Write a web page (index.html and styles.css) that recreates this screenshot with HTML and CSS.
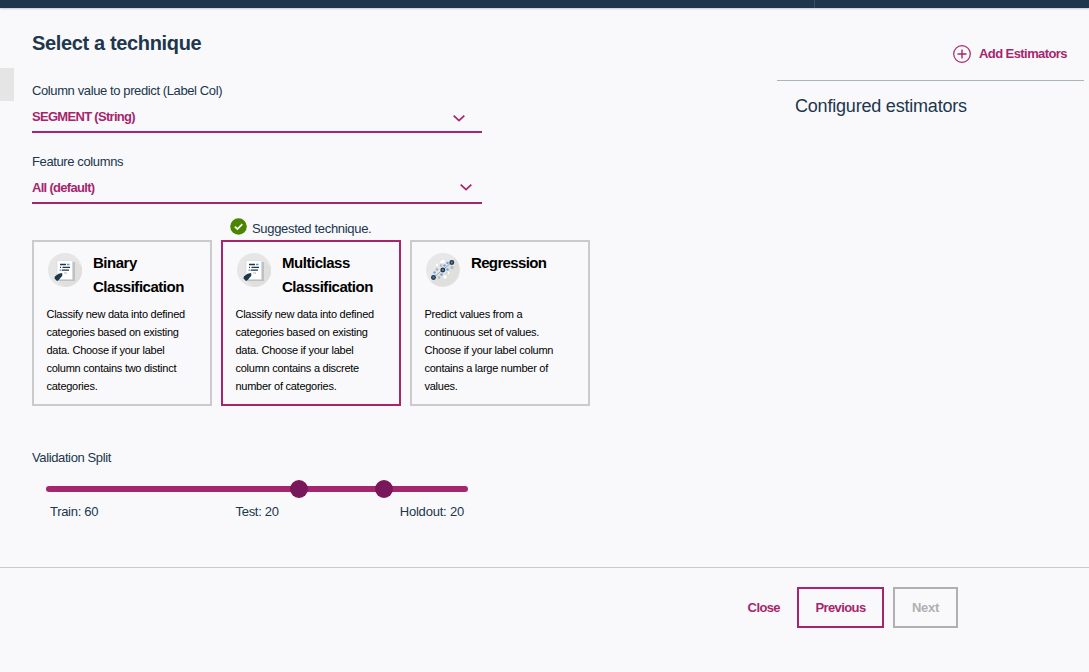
FILE: index.html
```html
<!DOCTYPE html>
<html lang="en">
<head>
<meta charset="utf-8">
<title>Select a technique</title>
<link rel="stylesheet" href="styles.css">
</head>
<body>
<svg class="defs" width="0" height="0" aria-hidden="true">
  <symbol id="doc" viewBox="0 0 34 34">
    <circle cx="17" cy="17" r="17" fill="#e6e6e6"/>
    <path d="M11 29L27 8L34 14A17 17 0 0 1 17 34Z" fill="#dfdfdd"/>
    <path d="M11 9h16v19H11z" fill="#bfc0c1"/>
    <path d="M9 7.500h15.500v19H9z" fill="#fff" stroke="#d3d5d6" stroke-width=".6"/>
    <g fill="none" stroke-width="1.300">
      <path d="M12 11.500h6M14.500 14.300h7.500M12 14.300h1M14 17.100h7" stroke="#1d3649"/>
      <path d="M19 11.500h2.500M11.500 17.100h2" stroke="#5596e6"/>
      <path d="M16 20h3" stroke="#c7c7c7"/>
    </g>
    <path d="M6.800 23.500L10.500 20.800L14.200 20L14.300 22.800L10.300 27.500L9 28L6.500 25.500Z" fill="#1d3649"/>
  </symbol>
  <symbol id="scatter" viewBox="0 0 34 34">
    <circle cx="17" cy="17" r="17" fill="#e7e7e7"/>
    <path d="M29 5A17 17 0 0 1 5 29Z" fill="#dfdfdd"/>
    <path d="M7.500 24.500L25.500 9.500" stroke="#8f979d" stroke-width=".8"/>
    <g fill="#fff"><circle cx="17" cy="8.500" r="1.700"/><circle cx="11" cy="12" r="1.300"/><circle cx="22" cy="20" r="1.400"/><circle cx="19" cy="24" r="1.700"/><circle cx="15" cy="9" r="1"/></g>
    <g fill="#b5b6b6"><circle cx="15" cy="12.500" r="1.300"/><circle cx="11" cy="16.500" r="1.400"/><circle cx="26" cy="14.500" r="1.500"/><circle cx="13" cy="24.500" r="1.200"/><circle cx="21" cy="20" r=".8"/></g>
    <g fill="#6ba3e8"><circle cx="21.500" cy="10" r="1.200"/><circle cx="18.500" cy="12.500" r="1.200"/><circle cx="8.500" cy="19.500" r="1.200"/><circle cx="15.500" cy="21.500" r="1.200"/><circle cx="21.500" cy="16.500" r="1.200"/></g>
    <g fill="#477db8" stroke="#1d3649" stroke-width="1.300"><circle cx="7.500" cy="24.500" r="1.800"/><circle cx="16.800" cy="17" r="1.800"/><circle cx="25.800" cy="9.500" r="1.800"/></g>
  </symbol>
</svg>
<div class="topbar"><span class="topbar-rule"></span></div>
<main class="workspace">
  <div class="gutter"><span class="side-tab"></span></div>
  <section class="settings">
    <h1>Select a technique</h1>
    <div class="field">
      <div class="label wide-label">Column value to predict (Label Col)</div>
      <div class="select first"><span>SEGMENT (String)</span>
        <svg width="12" height="7" viewBox="0 0 12 7"><path d="M.7.7L6 5.600L11.300.7"/></svg></div>
    </div>
    <div class="field">
      <div class="label">Feature columns</div>
      <div class="select second"><span>All (default)</span>
        <svg width="12" height="7" viewBox="0 0 12 7"><path d="M.7.7L6 5.600L11.300.7"/></svg></div>
    </div>
    <div class="suggestion">
      <svg width="17" height="17" viewBox="0 0 17 17"><circle cx="8.500" cy="8.500" r="8.300" fill="#4b8400"/><path d="M4.800 8.700L7.400 11L12.300 6.200" fill="none" stroke="#fff" stroke-width="1.700"/></svg>
      <span>Suggested technique.</span>
    </div>
    <div class="cards">
      <article class="card">
        <div class="card-head"><svg class="badge"><use href="#doc"/></svg><h2>Binary<br>Classification</h2></div>
        <p>Classify new data into defined<br>categories based on existing<br>data. Choose if your label<br>column contains two distinct<br>categories.</p>
      </article>
      <article class="card selected">
        <div class="card-head"><svg class="badge"><use href="#doc"/></svg><h2>Multiclass<br>Classification</h2></div>
        <p>Classify new data into defined<br>categories based on existing<br>data. Choose if your label<br>column contains a discrete<br>number of categories.</p>
      </article>
      <article class="card">
        <div class="card-head"><svg class="badge"><use href="#scatter"/></svg><h2 class="tight">Regression</h2></div>
        <p>Predict values from a<br>continuous set of values.<br>Choose if your label column<br>contains a large number of<br>values.</p>
      </article>
    </div>
    <div class="label split-label">Validation Split</div>
    <div class="slider"><span class="handle" style="left:60%"></span><span class="handle" style="left:80%"></span></div>
    <div class="slider-labels"><span>Train: 60</span><span>Test: 20</span><span>Holdout: 20</span></div>
  </section>
  <aside class="estimators">
    <div class="add">
      <svg width="18" height="18" viewBox="0 0 18 18"><circle cx="9" cy="9" r="8.300"/><path d="M9 4.500v9M4.500 9h9"/></svg>
      <span>Add Estimators</span>
    </div>
    <h3>Configured estimators</h3>
  </aside>
</main>
<footer>
  <span class="close">Close</span>
  <button class="previous">Previous</button>
  <button class="next" disabled>Next</button>
</footer>
</body>
</html>
```
FILE: styles.css
```css
* { box-sizing: border-box; }
body {
  margin: 0; width: 1089px; height: 672px; overflow: hidden;
  display: flex; flex-direction: column;
  background: #f9f9fb; color: #20364c;
  font: 13px/18px "Liberation Sans", Arial, sans-serif;
}
h1, h2, h3, p { margin: 0; }
.defs { position: absolute; }
.topbar { height: 8px; flex: none; background: #20364d; box-shadow: 0 1px 2px rgba(0,0,0,.2); display: flex; }
.topbar-rule { margin-left: 814px; width: 1px; background: #2f4f6b; }
.workspace { height: 559px; flex: none; display: flex; }
.gutter { width: 32px; padding-top: 60px; }
.side-tab { display: block; width: 14px; height: 33px; background: #e5e5e5; }
.settings { width: 558px; padding-top: 23px; }
h1 { font-size: 20px; line-height: 24px; letter-spacing: -.35px; white-space: nowrap; }
.field { width: 450px; }
.field .label { height: 18px; margin-top: 20px; }
h1 + .field .label { margin-top: 27px; }
.label { letter-spacing: -.38px; }
.wide-label { letter-spacing: -.39px; }
.select {
  display: flex; justify-content: space-between; height: 33px;
  padding: 8px 10px 0 0; border-bottom: 2px solid #a6266e;
  color: #a6266e; font-weight: 700; letter-spacing: -.7px;
}
.select svg { margin-top: 5px; fill: none; stroke: #a6266e; stroke-width: 1.8; }
.select.first svg { margin: 7px 7px 0 0; }
.suggestion { display: flex; height: 36px; padding: 14px 0 0 198px; gap: 5px; letter-spacing: -.32px; }
.suggestion span { padding-top: 2px; }
.cards { display: grid; grid-template-columns: repeat(3, 180px); gap: 9px; }
.card { height: 166px; border: 2px solid #cacbcd; padding: 9px 0 0 12.5px; color: #000; }
.card.selected { border-color: #a6266e; }
.card-head { display: flex; height: 54px; }
.badge { width: 34px; height: 34px; margin: 2px 11px 0 1.5px; flex: none; }
h2 { font-size: 15px; line-height: 24px; letter-spacing: -.47px; }
h2.tight { letter-spacing: -.65px; }
.card p { font-size: 11px; letter-spacing: -.26px; line-height: 18px; white-space: nowrap; }
.split-label { margin-top: 43px; }
.slider { position: relative; width: 422px; height: 6px; margin: 19px 0 0 14px; border-radius: 3px; background: #a6266e; }
.handle { position: absolute; top: -6px; width: 18px; height: 18px; margin-left: -9px; border-radius: 50%; background: #78175a; }
.slider-labels { display: grid; grid-template-columns: 185.5px 1fr auto; width: 414px; margin: 11px 0 0 18px; letter-spacing: -.3px; }
.slider-labels span:last-child { letter-spacing: -.2px; }
.estimators { width: 307px; margin-left: 187px; padding-top: 36px; }
.add {
  display: flex; justify-content: flex-end; height: 37px; gap: 8px; padding-right: 17px;
  border-bottom: 1px solid #a9b6b8; color: #a6266e; font-weight: 700; letter-spacing: -.58px;
}
.add svg { fill: none; stroke: #a6266e; stroke-width: 1.2; }
.add { padding-top: 1px; }
.add path { stroke-width: 1.4; }
h3 { padding: 13px 0 0 18px; font-size: 18px; line-height: 24px; font-weight: 400; letter-spacing: -.2px; }
footer {
  display: flex; height: 105px; padding: 19px 131px 0 0; justify-content: flex-end;
  border-top: 1px solid #c9cbcc; font-weight: 700; letter-spacing: -.6px;
}
.close { margin-right: 17px; line-height: 41px; color: #a6266e; }
button { height: 41px; padding: 0; border: 2px solid; background: none; font: inherit; letter-spacing: inherit; }
.previous { width: 87px; margin-right: 9px; color: #a6266e; }
.next { width: 65px; color: #afb0b1; letter-spacing: -.3px; }
```
